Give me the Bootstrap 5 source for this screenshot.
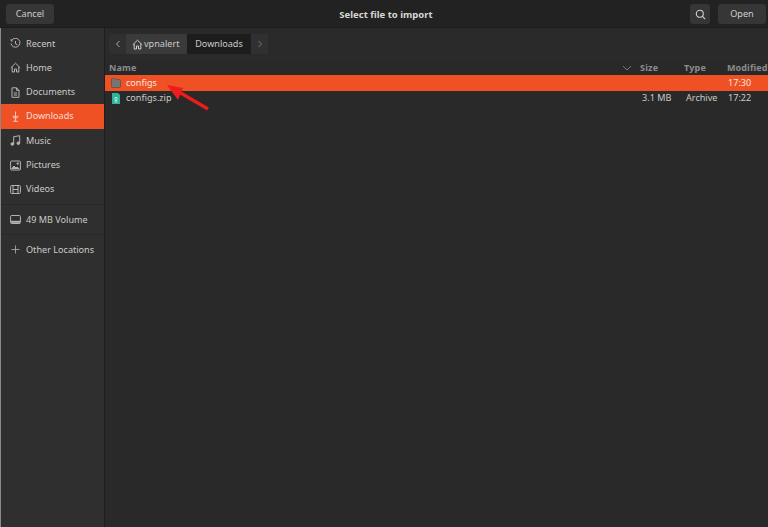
<!DOCTYPE html>
<html lang="en"><head><meta charset="utf-8"><title>Select file to import</title>
<link href="https://cdn.jsdelivr.net/npm/bootstrap@5.3.0/dist/css/bootstrap.min.css" rel="stylesheet">
<style>
html,body{height:527px;overflow:hidden;background:#292929}
body{font-family:"Noto Sans",sans-serif;font-size:9.1px;line-height:12px;color:#cbcac7}
.dlg-head{height:28px;background:#222;border-bottom:1px solid #1c1c1c;padding:4px 2px 0 6px}
.dlg-side{flex:1 1 0}
.dlg-btn{height:20px;background:#363636;border-radius:3px;color:#d0cfcc;display:flex;align-items:center;justify-content:center;font-size:9.1px}
.btn-wide{width:48px}
.btn-find{width:20px}
.dlg-title{font-weight:700;color:#d8d7d4;font-size:9.5px;padding-top:5px}
.dlg-body{height:499px}
.side{width:105px;background:#2f2f2f;border-left:1px solid #8a8a8a;border-right:1px solid #1e1e1e;padding-top:3.4px;flex:none}
.side-row{height:24.3px;display:flex;align-items:center;padding-left:9px;gap:5px;color:#cbcac7}
.side-row svg{flex:none;width:11px;height:11px;color:#b5b4b1}
.side-on{background:#ef5024;color:#f4dfd6}
.side-on svg{color:#f4d3c6}
.side-sep{height:1px;background:#282828;margin:3px 0 2px}
.side-sep-low{margin:2px 0 3px}
.main{flex:1;min-width:0;background:#292929}
.crumbs{height:33px;padding:6px 0 0 4px;background:#2a2a2a}
.crumb-box{height:20px;display:inline-flex;background:#303030;border-radius:3px;overflow:hidden;align-items:stretch}
.crumb{display:flex;align-items:center}
.crumb-arrow{width:17px;justify-content:center;display:flex;align-items:center;color:#aaa}
.crumb-home{background:#3a3a3a;padding:0 7px 0 6px;gap:1px;width:61px}
.crumb-now{background:#1d1d1d;width:64px;justify-content:center}
.cols{display:flex;height:14px;align-items:center;color:#8c8c8c;font-weight:700;font-size:9px;letter-spacing:.2px;padding-left:4px}
.cell-name{flex:1;min-width:0;display:flex;align-items:center;gap:5px}
.cell-size{width:45px;padding-left:5px}
.cell-type{width:43px;padding-left:4px}
.cell-mod{width:43px;padding-left:3px;white-space:nowrap}
.cols .cell-size{padding-left:3px}
.cols .cell-type{padding-left:2px}
.cols .cell-mod{padding-left:2px;letter-spacing:.1px}
.frow{display:flex;height:15.5px;align-items:center;padding-left:6px}
.frow-on{background:#ef5024;color:#f9e6de}
.arrow-over{position:absolute;left:160px;top:78px;width:54px;height:36px}
.sort-mark{position:absolute;left:622px;top:65px;width:10px;height:6px}
</style></head>
<body>
<div class="dlg-head d-flex align-items-start justify-content-between">
<div class="dlg-side d-flex"><div class="dlg-btn btn-wide">Cancel</div></div>
<div class="dlg-title">Select file to import</div>
<div class="dlg-side d-flex justify-content-end gap-2">
<div class="dlg-btn btn-find"><svg width="11" height="11" viewBox="0 0 11 11" fill="none" stroke="#d0cfcc" stroke-width="1.1"><circle cx="4.800" cy="4.800" r="3.500"/><path d="M7.400 7.400l2.600 2.600"/></svg></div>
<div class="dlg-btn btn-wide">Open</div>
</div>
</div>
<div class="dlg-body d-flex">
<nav class="side">
<div class="side-row"><svg viewBox="0 0 11 11" fill="none" stroke="currentColor"><path d="M1.500 2.500A4.500 4.500 0 1 1 1 5.500"/><path d="M1 1v2h2" stroke-width=".8"/><path d="M5.500 3v2.800l2 1"/></svg>Recent</div>
<div class="side-row"><svg viewBox="0 0 11 11" fill="none" stroke="currentColor"><path d="M.8 5.800L5.500 1.200l4.700 4.600M2.200 5v5h2.300V7h2v3h2.300V5"/></svg>Home</div>
<div class="side-row"><svg viewBox="0 0 11 11" fill="none" stroke="currentColor"><path d="M2 .8h4.500l2.500 2.500v7H2zM6.500 .8v2.500H9M3.800 6h3.400M3.800 8h3.400"/></svg>Documents</div>
<div class="side-row side-on"><svg viewBox="0 0 11 11" fill="none" stroke="currentColor"><path d="M3 4.500a2.500 3 0 0 0 5 0M5.500.5v6M4 5l1.500 1.700L7 5M3 10.300h5M5.500 7.500v2.800" stroke-width=".9"/></svg>Downloads</div>
<div class="side-row"><svg viewBox="0 0 11 11" fill="none" stroke="currentColor"><path d="M3.700 9V1.700l6-1V8"/><circle cx="2.300" cy="9" r="1.300" fill="currentColor"/><circle cx="8.300" cy="8.200" r="1.300" fill="currentColor"/></svg>Music</div>
<div class="side-row"><svg viewBox="0 0 11 11" fill="none" stroke="currentColor"><rect x=".6" y="1" width="9.800" height="9" rx="1"/><path d="M1.500 9l2.500-3 2 2 1-1 2.500 2" fill="currentColor"/><circle cx="7.800" cy="3.500" r=".8" fill="currentColor"/></svg>Pictures</div>
<div class="side-row"><svg viewBox="0 0 11 11" fill="none" stroke="currentColor"><rect x=".6" y="1.500" width="9.800" height="8" rx="1"/><path d="M3 1.500v8M8 1.500v8M3 5.500h5"/></svg>Videos</div>
<div class="side-sep"></div>
<div class="side-row"><svg viewBox="0 0 11 11" fill="none" stroke="currentColor"><rect x=".6" y="1.500" width="9.800" height="8" rx="1"/><path d="M1 7.800h9" stroke-width="2"/></svg>49 MB Volume</div>
<div class="side-sep side-sep-low"></div>
<div class="side-row"><svg viewBox="0 0 11 11" fill="none" stroke="currentColor" stroke-width=".8"><path d="M5.500 1.500v8M1.500 5.500h8"/></svg>Other Locations</div>
</nav>
<main class="main">
<div class="crumbs"><div class="crumb-box">
<div class="crumb-arrow"><svg width="6" height="8" viewBox="0 0 6 8" fill="none" stroke="currentColor"><path d="M4.500 1L1.500 4l3 3"/></svg></div>
<div class="crumb crumb-home"><svg width="11" height="11" viewBox="0 0 11 11" fill="none" stroke="#d0cfcc"><path d="M.8 5.800L5.500 1.200l4.700 4.600M2.200 5v5h2.300V7h2v3h2.300V5"/></svg>vpnalert</div>
<div class="crumb crumb-now">Downloads</div>
<div class="crumb-arrow"><svg width="6" height="8" viewBox="0 0 6 8" fill="none" stroke="#777"><path d="M1.500 1l3 3-3 3"/></svg></div>
</div></div>
<div class="cols"><div class="cell-name">Name</div><div class="cell-size">Size</div><div class="cell-type">Type</div><div class="cell-mod">Modified</div></div>
<div class="frow frow-on"><div class="cell-name"><svg width="10" height="10" viewBox="0 0 10 10"><path d="M.5 1.500a1 1 0 0 1 1-1h2.500l1 1h3.500a1 1 0 0 1 1 1V8.700a.8.800 0 0 1-.8.800H1.300A.8.800 0 0 1 .5 8.700z" fill="#7a7370" stroke="#5c5350" stroke-width=".8"/></svg>configs</div><div class="cell-size"></div><div class="cell-type"></div><div class="cell-mod">17:30</div></div>
<div class="frow"><div class="cell-name"><svg width="10" height="11" viewBox="0 0 10 11"><path d="M1 0h6l2 2v9H1z" fill="#2eb39c"/><path d="M4 4.500h2v3H4zM3.500 9h3" fill="none" stroke="#d8f1ec" stroke-width=".8"/></svg>configs.zip</div><div class="cell-size">3.1 MB</div><div class="cell-type">Archive</div><div class="cell-mod">17:22</div></div>
</main>
</div>
<svg class="sort-mark" viewBox="0 0 10 6" fill="none" stroke="#777"><path d="M1 1l4 4 4-4"/></svg>
<svg class="arrow-over" viewBox="0 0 54 36"><path d="M48 31L19 14" stroke="#ee1c1c" stroke-width="3.200"/><path d="M7 7l16 3-5 12z" fill="#ee1c1c"/></svg>
</body></html>
